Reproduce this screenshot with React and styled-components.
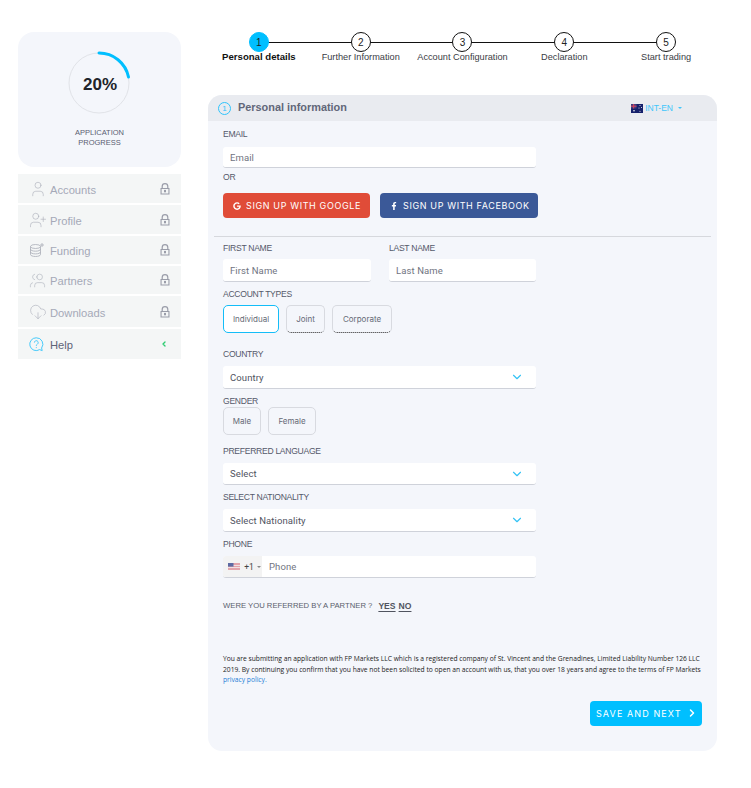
import React from 'react';
import styled, { createGlobalStyle } from 'styled-components';
import { User, UserPlus, Users, CloudDownload, ChevronDown, ChevronRight, ChevronLeft } from 'lucide-react';
import { FaGoogle, FaFacebookF } from 'react-icons/fa';

const GlobalStyle = createGlobalStyle`
  html, body { margin: 0; padding: 0; background: #fff; }
  body { font-family: "Liberation Sans", Arial, sans-serif; color: #333; }
  * { box-sizing: border-box; }
`;

const Page = styled.div`
  display: flex;
  align-items: flex-start;
  gap: 27px;
  padding: 32px 0 0 18px;
  height: 788px;
  overflow: hidden;
`;

const Sidebar = styled.aside`
  width: 163px;
  flex: none;
`;

const ProgressCard = styled.div`
  height: 135px;
  background: #f4f6fb;
  border-radius: 16px;
  display: flex;
  flex-direction: column;
  align-items: center;
  padding-top: 18px;
  margin-bottom: 7px;
`;

const Ring = styled.div`
  position: relative;
  width: 64px;
  height: 64px;
  margin-left: -1px;
`;

const RingValue = styled.div`
  position: absolute;
  inset: 0;
  display: flex;
  align-items: center;
  justify-content: center;
  padding: 5px 0 0 2px;
  font-size: 17px;
  font-weight: bold;
  color: #20232a;
`;

const ProgressLabel = styled.div`
  margin-top: 14px;
  font-size: 7.5px;
  line-height: 10px;
  text-align: center;
  color: #5a6072;
`;

const Menu = styled.nav`
  display: flex;
  flex-direction: column;
  gap: 2px;
`;

const MenuItem = styled.div`
  height: ${p => p.$h}px;
  background: #f4f6f6;
  display: flex;
  align-items: center;
  padding: 0 11px 0 11px;
  color: ${p => (p.$active ? '#5f6478' : '#a5a9b8')};
  font-size: 11.2px;
  svg { flex: none; }
`;

const MenuIcon = styled.span`
  width: 21px;
  height: 18px;
  display: flex;
  align-items: center;
  color: ${p => (p.$active ? '#33c5fb' : '#a9adb8')};
`;

const MenuText = styled.span`
  flex: 1;
  padding-top: 2px;
`;

const LockSlot = styled.span`
  display: flex;
`;

const Main = styled.main`
  width: 509px;
  flex: none;
`;

const Stepper = styled.div`
  display: flex;
  height: 63px;
`;

const Step = styled.div`
  position: relative;
  flex: 1;
  display: flex;
  flex-direction: column;
  align-items: center;

  &:not(:last-child)::after {
    content: '';
    position: absolute;
    top: 10px;
    left: 50%;
    width: 100%;
    height: 1px;
    background: #111;
  }
`;

const StepDot = styled.div`
  position: relative;
  z-index: 1;
  width: 20px;
  height: 20px;
  border-radius: 50%;
  background: ${p => (p.$active ? '#00bfff' : '#fff')};
  border: 1px solid ${p => (p.$active ? '#00bfff' : '#111')};
  display: flex;
  align-items: center;
  justify-content: center;
  font-size: 10px;
  color: #222;
`;

const StepLabel = styled.div`
  font-size: ${p => (p.$active ? 9.6 : 9.2)}px;
  line-height: 12px;
  margin-top: -1px;
  white-space: nowrap;
  color: ${p => (p.$active ? '#111' : '#3a3d45')};
  font-weight: ${p => (p.$active ? 'bold' : 'normal')};
`;

const Panel = styled.section`
  height: 656px;
  background: #f4f6fb;
  border-radius: 14px;
  overflow: hidden;
`;

const PanelHeader = styled.header`
  height: 26px;
  background: #e9ebf0;
  display: flex;
  align-items: center;
  padding: 0 35px 0 10px;
`;

const InfoDot = styled.span`
  width: 13px;
  height: 13px;
  border-radius: 50%;
  border: 1px solid #2fc3fb;
  color: #2fc3fb;
  font-size: 8px;
  display: flex;
  align-items: center;
  justify-content: center;
  margin-right: 7px;
`;

const PanelTitle = styled.h2`
  flex: 1;
  margin: 0 0 2px;
  font-size: 10.9px;
  font-weight: bold;
  color: #626779;
`;

const Locale = styled.div`
  display: flex;
  align-items: center;
  gap: 2px;
  font-size: 8.5px;
  color: #3fc6fb;
`;

const Caret = styled.span`
  width: 0;
  height: 0;
  margin-left: 3px;
  border-left: 2.5px solid transparent;
  border-right: 2.5px solid transparent;
  border-top: 2.5px solid ${p => p.$color || '#3fc6fb'};
`;

const Form = styled.form`
  padding: 7px 0 0 15px;
`;

const Label = styled.div`
  font-size: 8.6px;
  letter-spacing: -0.3px;
  line-height: 13px;
  height: 12px;
  color: #55596a;
  text-transform: uppercase;
  margin-top: ${p => p.$top || 0}px;
  margin-bottom: ${p => p.$bottom || 0}px;
`;

const InputBox = styled.div`
  width: ${p => p.$w || 313}px;
  height: ${p => p.$h || 22}px;
  background: #fff;
  border-radius: 3px;
  border-bottom: 1px solid #cfd2da;
  display: flex;
  align-items: center;
  padding: 0 7px;
  font-family: Roboto, sans-serif;
  font-size: 9.5px;
  letter-spacing: 0.1px;
  color: ${p => (p.$dark ? '#50545f' : '#70747f')};
  position: relative;
  overflow: hidden;
`;

const SelectChevron = styled.span`
  margin-left: auto;
  margin-right: 5px;
  display: flex;
  color: #35c3f5;
`;

const SocialRow = styled.div`
  display: flex;
  gap: 10px;
  margin-top: 10px;
`;

const SocialButton = styled.div`
  width: ${p => p.$w}px;
  height: 25px;
  border-radius: 4px;
  background: ${p => p.$bg};
  color: #fff;
  display: flex;
  align-items: center;
  padding-left: ${p => p.$pad}px;
  gap: 5px;
  font-family: Inter, sans-serif;
  font-size: 9px;
  letter-spacing: 0.62px;
  white-space: nowrap;
`;

const Divider = styled.hr`
  border: 0;
  height: 1px;
  background: #d6d8dd;
  margin: 18px 6px 0 -9px;
`;

const Columns = styled.div`
  display: flex;
  gap: 18px;
  margin-top: ${p => p.$top || 0}px;
`;

const ChoiceRow = styled.div`
  display: flex;
  gap: 7px;
`;

const Choice = styled.div`
  width: ${p => p.$w}px;
  height: 28px;
  border-radius: 5px;
  border: 1px solid ${p => (p.$active ? '#14bdf8' : '#d8dae0')};
  border-bottom: 1px ${p => (p.$dotted ? 'dotted #222' : 'solid')} ${p => (p.$dotted ? '' : p.$active ? '#14bdf8' : '#d8dae0')};
  background: ${p => (p.$active ? '#fff' : 'transparent')};
  display: flex;
  align-items: center;
  justify-content: center;
  font-family: Inter, sans-serif;
  font-size: 8px;
  color: #666a76;
`;

const PhonePrefix = styled.div`
  align-self: stretch;
  width: 39px;
  flex: none;
  margin-left: -7px;
  margin-right: 7px;
  background: #f3f3f3;
  display: flex;
  align-items: center;
  padding-left: 5px;
  font-size: 8.5px;
  color: #444;
  letter-spacing: 0;
`;

const Referred = styled.div`
  margin-top: 22px;
  height: 12px;
  font-size: 7.7px;
  line-height: 12px;
  color: #5a5e6c;
  display: flex;
  gap: 3px;
`;

const RefLink = styled.span`
  font-size: 8.6px;
  font-weight: bold;
  color: #50545f;
  text-decoration: underline;
  text-underline-offset: 2px;
  margin-left: ${p => p.$left || 0}px;
`;

const Legal = styled.p`
  margin: 42px 0 0;
  width: 478px;
  font-family: "Open Sans", sans-serif;
  font-size: 6.7px;
  line-height: 10.5px;
  color: #222;
`;

const LegalLink = styled.span`
  color: #1d7fd6;
`;

const Footer = styled.div`
  display: flex;
  justify-content: flex-end;
  padding-right: 15px;
  margin-top: 15px;
`;

const SaveButton = styled.div`
  width: 112px;
  height: 25px;
  border-radius: 4px;
  background: #00bfff;
  color: #fff;
  display: flex;
  align-items: center;
  padding: 0 4px 0 6px;
  font-family: Inter, sans-serif;
  font-size: 9px;
  letter-spacing: 1.1px;
  white-space: nowrap;
  justify-content: space-between;
`;

const LockIcon = () => (
  <svg width="10" height="12" viewBox="0 0 10 12">
    <path d="M2.2 5.5V3.4a2.8 2.8 0 0 1 5.6 0v2.1" fill="none" stroke="#9a9da9" strokeWidth="1.2" />
    <path fillRule="evenodd" d="M.5 5h9v6.5h-9zM1.6 6.1v4.3h6.8V6.1z" fill="#9a9da9" />
    <rect x="4" y="6.9" width="2" height="2.4" fill="#9a9da9" />
  </svg>
);

const FundingIcon = () => (
  <svg width="16" height="16" viewBox="0 0 16 16" fill="none" stroke="#a9adb8" strokeWidth="0.8">
    <ellipse cx="6.5" cy="4.5" rx="5" ry="2" />
    <path d="M1.5 4.5v8c0 1.1 2.2 2 5 2s5-.9 5-2v-8M1.5 7.2c0 1.1 2.2 2 5 2s5-.9 5-2M1.5 9.9c0 1.1 2.2 2 5 2s5-.9 5-2" />
    <path d="M13 1v4M11 3h4" />
  </svg>
);

const HelpIcon = () => (
  <svg width="15" height="15" viewBox="0 0 15 15" fill="none" stroke="#33c5fb" strokeWidth="0.9">
    <path d="M7.2.8a6.4 6.4 0 1 0 3.4 11.8l2.6 1-.6-2.6A6.4 6.4 0 0 0 7.2.8z" />
    <path d="M5.4 5.6a1.9 1.9 0 1 1 2.9 1.6c-.7.5-1 .8-1 1.6M7.3 10.2v.9" />
  </svg>
);

const AuFlag = () => (
  <svg width="12" height="9" viewBox="0 0 12 9">
    <rect width="12" height="9" fill="#15206b" />
    <rect width="5.5" height="4.5" fill="#3d3f80" />
    <path d="M0 2.2h5.5M2.7 0v4.5" stroke="#e0415a" strokeWidth="1" />
    <circle cx="3" cy="6.8" r=".8" fill="#fff" />
    <circle cx="9" cy="1.5" r=".5" fill="#fff" />
    <circle cx="10.5" cy="3.5" r=".5" fill="#fff" />
    <circle cx="8" cy="4" r=".5" fill="#fff" />
    <circle cx="9" cy="7.2" r=".5" fill="#fff" />
  </svg>
);

const UsFlag = () => (
  <svg width="12" height="7" viewBox="0 0 12 7">
    <rect width="12" height="7" fill="#e3a4ab" />
    <path d="M0 2.5h12M0 4.5h12" stroke="#f4f0f1" strokeWidth="0.8" />
    <rect width="5.5" height="3.6" fill="#5d6aa3" />
  </svg>
);

const menu = [
  { label: 'Accounts', h: 29, icon: <User size={18} strokeWidth={0.8} /> },
  { label: 'Profile', h: 29, icon: <UserPlus size={18} strokeWidth={0.8} /> },
  { label: 'Funding', h: 28, icon: <FundingIcon /> },
  { label: 'Partners', h: 28, icon: <Users size={17} strokeWidth={0.8} style={{ transform: 'scaleX(-1)' }} /> },
  { label: 'Downloads', h: 31, icon: <CloudDownload size={18} strokeWidth={0.8} /> },
];

const steps = ['Personal details', 'Further Information', 'Account Configuration', 'Declaration', 'Start trading'];

const SelectField = ({ children, h }) => (
  <InputBox $dark $h={h}>
    {children}
    <SelectChevron><ChevronDown size={14} strokeWidth={2} /></SelectChevron>
  </InputBox>
);

export default function App() {
  return (
    <>
      <GlobalStyle />
      <Page>
        <Sidebar>
          <ProgressCard>
            <Ring>
              <svg width="64" height="64" viewBox="0 0 64 64">
                <circle cx="32" cy="33" r="30" fill="none" stroke="#e1e3e8" strokeWidth="1" />
                <path d="M32 3a30 30 0 0 1 29.5 24" fill="none" stroke="#00bfff" strokeWidth="3" strokeLinecap="round" />
              </svg>
              <RingValue>20%</RingValue>
            </Ring>
            <ProgressLabel>APPLICATION<br />PROGRESS</ProgressLabel>
          </ProgressCard>
          <Menu>
            {menu.map(item => (
              <MenuItem key={item.label} $h={item.h}>
                <MenuIcon>{item.icon}</MenuIcon>
                <MenuText>{item.label}</MenuText>
                <LockSlot><LockIcon /></LockSlot>
              </MenuItem>
            ))}
            <MenuItem $h={30} $active>
              <MenuIcon $active><HelpIcon /></MenuIcon>
              <MenuText>Help</MenuText>
              <ChevronLeft size={8} strokeWidth={4} color="#2ecc71" style={{ marginRight: 2 }} />
            </MenuItem>
          </Menu>
        </Sidebar>
        <Main>
          <Stepper>
            {steps.map((label, i) => (
              <Step key={label}>
                <StepDot $active={i === 0}>{i + 1}</StepDot>
                <StepLabel $active={i === 0}>{label}</StepLabel>
              </Step>
            ))}
          </Stepper>
          <Panel>
            <PanelHeader>
              <InfoDot>1</InfoDot>
              <PanelTitle>Personal information</PanelTitle>
              <Locale><AuFlag /> INT-EN <Caret /></Locale>
            </PanelHeader>
            <Form>
              <Label $bottom={7}>Email</Label>
              <InputBox $h={21}>Email</InputBox>
              <Label $top={3}>Or</Label>
              <SocialRow>
                <SocialButton $w={147} $bg="#e04c38" $pad={10}><FaGoogle size={8} /> SIGN UP WITH GOOGLE</SocialButton>
                <SocialButton $w={158} $bg="#3b5998" $pad={10}><FaFacebookF size={8} /> SIGN UP WITH FACEBOOK</SocialButton>
              </SocialRow>
              <Divider />
              <Columns $top={5}>
                <div>
                  <Label $bottom={5}>First Name</Label>
                  <InputBox $w={148} $h={23}>First Name</InputBox>
                </div>
                <div>
                  <Label $bottom={5}>Last Name</Label>
                  <InputBox $w={147} $h={23}>Last Name</InputBox>
                </div>
              </Columns>
              <Label $top={6} $bottom={5}>Account Types</Label>
              <ChoiceRow>
                <Choice $w={56} $active>Individual</Choice>
                <Choice $w={39} $dotted>Joint</Choice>
                <Choice $w={60} $dotted>Corporate</Choice>
              </ChoiceRow>
              <Label $top={15} $bottom={6}>Country</Label>
              <SelectField h={23}>Country</SelectField>
              <Label $top={6} $bottom={0}>Gender</Label>
              <ChoiceRow>
                <Choice $w={38}>Male</Choice>
                <Choice $w={48}>Female</Choice>
              </ChoiceRow>
              <Label $top={10} $bottom={6}>Preferred Language</Label>
              <SelectField>Select</SelectField>
              <Label $top={6} $bottom={6}>Select Nationality</Label>
              <SelectField h={23}>Select Nationality</SelectField>
              <Label $top={6} $bottom={6}>Phone</Label>
              <InputBox>
                <PhonePrefix><UsFlag />&nbsp;&nbsp;+1 <Caret $color="#888" /></PhonePrefix>
                Phone
              </InputBox>
              <Referred>
                WERE YOU REFERRED BY A PARTNER ? <RefLink $left={3}>YES</RefLink><RefLink>NO</RefLink>
              </Referred>
              <Legal>
                You are submitting an application with FP Markets LLC which is a registered company of St. Vincent and the Grenadines, Limited Liability Number 126 LLC 2019. By continuing you confirm that you have not been solicited to open an account with us, that you over 18 years and agree to the terms of FP Markets <LegalLink>privacy policy.</LegalLink>
              </Legal>
              <Footer>
                <SaveButton>SAVE AND NEXT <ChevronRight size={12} strokeWidth={3} /></SaveButton>
              </Footer>
            </Form>
          </Panel>
        </Main>
      </Page>
    </>
  );
}
